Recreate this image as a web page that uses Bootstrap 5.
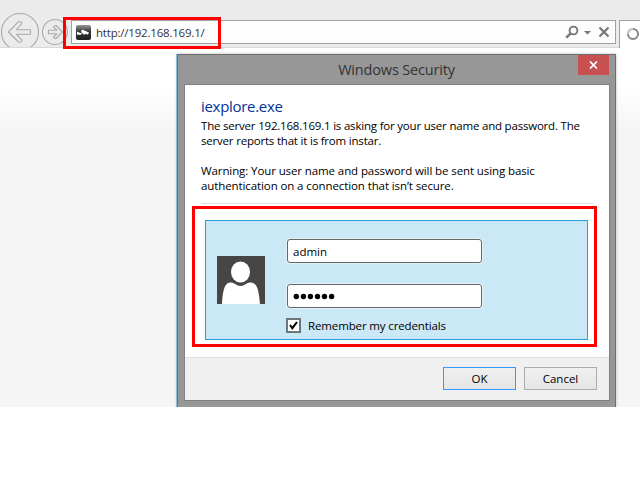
<!DOCTYPE html>
<html lang="en">
<head>
<meta charset="utf-8">
<meta name="viewport" content="width=device-width, initial-scale=1">
<title>Windows Security</title>
<link href="https://cdn.jsdelivr.net/npm/bootstrap@5.3.0/dist/css/bootstrap.min.css" rel="stylesheet">
<style>
body{font-family:"Open Sans","Noto Sans",sans-serif;font-size:11.5px;line-height:15px;color:#000;background:#fff;height:480px;overflow:hidden}
svg{display:block;flex:none}
.browser{height:407px;background:linear-gradient(#fff 48px,#fff 88px,#f5f5f5 130px)}
.toolbar{height:48px;background:#ebebeb;border-bottom:1px solid #d9d9d9}
.nav-arrows{width:71px;height:47px;flex:none}
.address{width:545px;height:24px;margin-top:20px;background:#fdfdfd;border:1px solid #a0a0a0;padding:0 5px 0 4px}
.url{color:#333;margin-left:5px;letter-spacing:-.2px}
.tab-stub{width:21px;height:28px;margin:20px 0 0 3px;background:#fff;border:solid #a0a0a0;border-width:1px 0 0 1px;padding:7px 0 0 7px}
.security-dialog{left:177px;top:54px;width:439px;height:353px;background:#979797;border:1px solid #6e6e6e;border-bottom:0;box-shadow:-1px 0 0 #8fc0e0,0 0 3px #bbb}
.title-bar{height:29px}
.title-text{font-size:14.5px;letter-spacing:-.17px;color:#333;line-height:20px;padding-top:5px}
.close-btn{right:6px;top:0;width:31px;height:20px;background:#c75050;border:0;padding:0}
.panel{margin:0 6px;width:426px;height:317px;background:#fff;border:1px solid #808080}
.message{height:119px;margin:0 16px;padding-top:12px;border-bottom:1px solid #dedede}
.program{font-size:15px;letter-spacing:-.3px;line-height:19px;color:#003399;margin-bottom:2px}
.copy span{display:block;height:15px}
.copy{letter-spacing:-.2px}
.copy.warning{letter-spacing:-.1px;margin-top:15px}
.credentials{width:383px;height:120px;margin:16px 0 0 20px;background:#cbe8f6;border:1px solid #26a0da;padding:18px 0 0 11px;gap:22px}
.avatar{margin-top:17px}
.field{width:195px;height:24px;border:1px solid #666;border-radius:3px;background:#fff;padding:0 5px;font-size:11.5px;color:#000;line-height:22px;box-shadow:0 0 0 1px #e2f1f8}
.field:focus{outline:0}
.password-field{margin-top:21px}
.remember-row{margin:10px 0 0 -1px}
.remember{margin-left:7px;letter-spacing:-.13px}
.tick{width:15px;height:15px}
.actions{margin-top:17px;background:#f0f0f0;border-top:1px solid #dfdfdf;padding:9px 12px 0 0;gap:8px}
.dlg-btn{width:73px;height:23px;font-size:11.5px;line-height:21px;color:#000;padding:0;border:1px solid #acacac;border-radius:0;background:linear-gradient(#f0f0f0,#e5e5e5)}
.dlg-btn.default{border-color:#3399ff}
.marker{border:3px solid #f00;pointer-events:none}
.marker-url{left:63px;top:17px;width:158px;height:32px}
.marker-login{left:192px;top:206px;width:405px;height:141px}
</style>
</head>
<body>
<main class="browser position-relative overflow-hidden">
  <header class="toolbar d-flex align-items-start">
    <svg class="nav-arrows" viewBox="0 0 71 47" fill="none" stroke="#aaa" stroke-width="1.1">
      <circle cx="20" cy="32" r="18.5"/>
      <path d="M8.500 32 18.500 21.700Q20.500 21 22 23.500L16.500 29.700H30.500V34.300H16.500L22 40.200Q20.500 43 18.500 42Z" stroke-linejoin="round"/>
      <circle cx="55" cy="32" r="12.500"/>
      <path d="M62.500 32 56 25.500Q54.500 25.200 53.500 27L57 30.300H48.500V33.700H57L53.500 37Q54.500 39 56 38.500Z" stroke-linejoin="round"/>
    </svg>
    <div class="address d-flex align-items-center flex-shrink-0">
      <svg width="15" height="15" viewBox="0 0 15 15">
        <defs><linearGradient id="fav" x2="0" y2="1"><stop stop-color="#999"/><stop offset=".45" stop-color="#333"/><stop offset="1" stop-color="#222"/></linearGradient></defs>
        <rect width="15" height="15" rx="2" fill="url(#fav)"/>
        <path d="M6 4.500 13 7.500 12 9.500 9.500 9 8 9.700 5 7ZM1 6.500 3 7.500 6 8.500 5 9.800H1Z" fill="#fff"/>
      </svg>
      <span class="url">http://192.168.169.1/</span>
      <div class="d-flex align-items-center ms-auto">
        <svg width="45" height="15" viewBox="0 0 45 15" fill="none" stroke="#777">
          <circle cx="8.500" cy="5.500" r="3.900" stroke-width="1.900"/><path d="M5.700 8.300 1.200 12.700" stroke-width="2.500"/>
          <path d="M19 6H26L22.500 9.500Z" fill="#777" stroke="none"/>
          <path d="M34.500 2.500 43.500 11.500M43.500 2.500 34.500 11.500" stroke-width="2.200"/>
        </svg>
      </div>
    </div>
    <div class="tab-stub flex-shrink-0 overflow-hidden">
      <svg width="13" height="13" viewBox="0 0 13 13" fill="none"><circle cx="6" cy="6" r="5" stroke="#888" stroke-width="2"/><path d="M1 6A5 5 0 0 1 6 1" stroke="#ccc" stroke-width="2"/></svg>
    </div>
  </header>

  <section class="security-dialog position-absolute">
    <div class="title-bar text-center position-relative">
      <div class="title-text">Windows Security</div>
      <button class="close-btn position-absolute d-flex align-items-center justify-content-center" aria-label="Close">
        <svg width="9" height="8" viewBox="0 0 9 8" stroke="#fff" stroke-width="1.7"><path d="M1 .5 8 7.5M8 .5 1 7.5"/></svg>
      </button>
    </div>
    <div class="panel d-flex flex-column">
      <div class="message text-nowrap">
        <h1 class="program fw-normal">iexplore.exe</h1>
        <p class="mb-0 copy"><span>The server 192.168.169.1 is asking for your user name and password. The</span><span>server reports that it is from instar.</span></p>
        <p class="mb-0 copy warning"><span>Warning: Your user name and password will be sent using basic</span><span>authentication on a connection that isn’t secure.</span></p>
      </div>
      <form class="credentials d-flex align-items-start">
        <svg class="avatar" width="48" height="48" viewBox="0 0 48 48"><path fill="#464646" d="M0 0H48V48H0Z"/><ellipse cx="23.500" cy="16" rx="9.500" ry="10.500" fill="#fff"/><path d="M5 48C5.500 37 7 27 13 26.500Q16 26 18 28Q23.500 32 29 28Q31 26 34 26.500C41 27 42 37 43 48Z" fill="#fff"/></svg>
        <div class="d-flex flex-column">
          <input class="field" type="text" value="admin" aria-label="User name">
          <div class="field password-field d-flex align-items-center" role="textbox" aria-label="Password">
            <svg width="43" height="7" viewBox="0 0 43 7"><circle cx="3.300" cy="3.500" r="2.700"/><circle cx="10.400" cy="3.500" r="2.700"/><circle cx="17.400" cy="3.500" r="2.700"/><circle cx="24.500" cy="3.500" r="2.700"/><circle cx="31.500" cy="3.500" r="2.700"/><circle cx="38.600" cy="3.500" r="2.700"/></svg>
          </div>
          <label class="remember-row d-flex align-items-center text-nowrap">
            <svg class="tick" viewBox="0 0 15 15"><rect x="1.500" y="1.500" width="12" height="12" fill="#fff" stroke="#777"/><rect x=".5" y=".5" width="14" height="14" fill="none" stroke="#000" stroke-dasharray="1 1"/><path d="M4 7 6.300 10.200 11 4" fill="none" stroke="#000" stroke-width="2"/></svg>
            <span class="remember">Remember my credentials</span>
          </label>
        </div>
      </form>
      <div class="actions d-flex justify-content-end flex-grow-1 align-items-start">
        <button class="btn dlg-btn default">OK</button>
        <button class="btn dlg-btn">Cancel</button>
      </div>
    </div>
  </section>
  <div class="marker marker-url position-absolute"></div>
  <div class="marker marker-login position-absolute"></div>
</main>
<script src="https://cdn.jsdelivr.net/npm/bootstrap@5.3.0/dist/js/bootstrap.bundle.min.js"></script>
</body>
</html>
